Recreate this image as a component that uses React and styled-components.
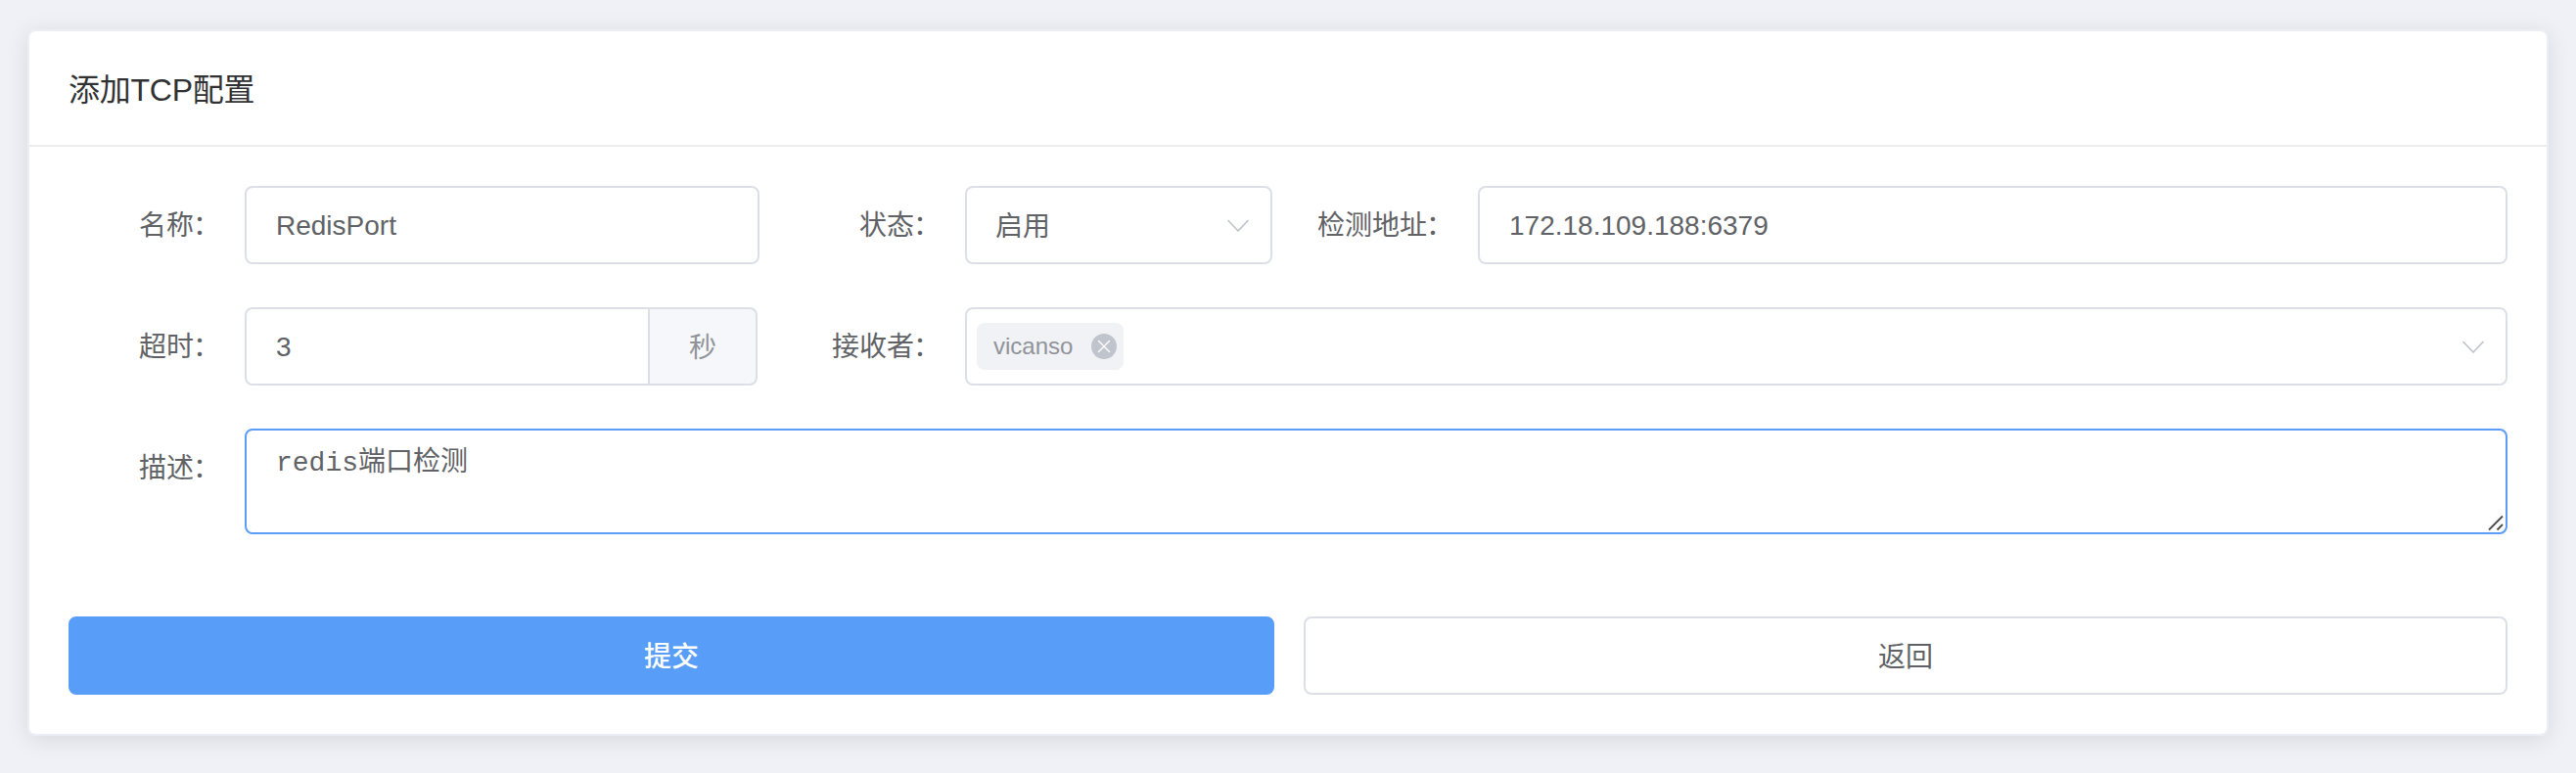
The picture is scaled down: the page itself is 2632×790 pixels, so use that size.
import React from "react";
import styled, { createGlobalStyle, css } from "styled-components";

const GlobalStyle = createGlobalStyle`
  *, *::before, *::after { box-sizing: border-box; }
  body {
    margin: 0;
    background: #f0f1f6;
    color: #606266;
    font-family: "Liberation Sans", "Noto Sans CJK SC", sans-serif;
    font-size: 28px;
    -webkit-font-smoothing: antialiased;
  }
`;

const Page = styled.main`
  height: 790px;
  padding: 30px 28px 38px;
  background: #f0f1f6;
  overflow: hidden;
`;

const Card = styled.section`
  height: 722px;
  border: 2px solid #ebeef5;
  border-radius: 8px;
  background: #fff;
  background-clip: padding-box;
  box-shadow: 0 4px 24px rgba(0, 0, 0, 0.1);
`;

const CardHeader = styled.header`
  display: flex;
  align-items: center;
  height: 118px;
  padding: 3px 40px 0;
  border-bottom: 2px solid #ebecf0;
`;

const Title = styled.h1`
  margin: 0;
  color: #303133;
  font-size: 32px;
  font-weight: 400;
  line-height: 40px;
  letter-spacing: -0.25px;
`;

const Form = styled.form`
  display: flex;
  flex-direction: column;
  gap: 44px;
  padding: 40px;
`;

const Row = styled.div`
  display: flex;
`;

const Field = styled.div`
  display: flex;
  align-items: flex-start;
  flex: ${(p) => (p.$width ? `0 0 ${p.$width}px` : "1 1 0")};
  min-width: 0;
`;

const LabelText = styled.label`
  flex: 0 0 ${(p) => p.$width || 180}px;
  height: 80px;
  padding-right: 24px;
  line-height: 82px;
  text-align: right;
  white-space: nowrap;
`;

const Colon = styled.span`
  margin: 0 1px 0 -1px;
`;

const control = css`
  height: 80px;
  border: 2px solid #dcdfe6;
  border-radius: 8px;
  background: #fff;
  color: #606266;
`;

const Input = styled.input`
  ${control}
  flex: 1;
  min-width: 0;
  margin: 0;
  padding: 2px 30px 0;
  outline: none;
  font: inherit;
  ${(p) => p.$joined && "border-radius: 8px 0 0 8px;"}
`;

const Unit = styled.span`
  display: flex;
  align-items: center;
  height: 80px;
  padding: 0 40px 2px;
  border: 2px solid #dcdfe6;
  border-left: 0;
  border-radius: 0 8px 8px 0;
  background: #f5f7fa;
  color: #909399;
`;

const Select = styled.div`
  ${control}
  display: flex;
  flex: 1;
  align-items: center;
  justify-content: space-between;
  padding: 0 21px 0 ${(p) => (p.$multiple ? 10 : 29)}px;
`;

const SelectValue = styled.span`
  padding-bottom: 3px;
`;

const Tag = styled.span`
  display: flex;
  align-items: center;
  justify-content: space-between;
  width: 150px;
  height: 48px;
  padding: 0 7px 0 17px;
  border-radius: 8px;
  background: #f0f2f5;
  color: #909399;
  font-size: 24px;
`;

const TextareaBox = styled.div`
  position: relative;
  display: flex;
  flex: 1;
`;

const Textarea = styled.textarea`
  ${control}
  flex: 1;
  height: 108px;
  margin: 0;
  padding: 13px 30px 7px;
  border-color: #5a9cf8;
  outline: none;
  resize: none;
  font-family: "Liberation Mono", "Noto Sans CJK SC", monospace;
  font-size: 28px;
  line-height: 42px;
`;

const GripIcon = styled.svg`
  position: absolute;
  right: 3px;
  bottom: 3px;
`;

const Actions = styled.div`
  display: flex;
  gap: 30px;
  margin-top: 40px;
`;

const Button = styled.button`
  flex: 0 0 ${(p) => p.$width}px;
  height: 80px;
  padding: 0 0 2px;
  border: 2px solid ${(p) => (p.$primary ? "#589df8" : "#dcdfe6")};
  border-radius: 8px;
  background: ${(p) => (p.$primary ? "#589df8" : "#fff")};
  color: ${(p) => (p.$primary ? "#fff" : "#606266")};
  font: inherit;
  font-weight: ${(p) => (p.$primary ? 500 : 400)};
`;

const Label = ({ text, width }) => (
  <LabelText $width={width}>
    {text}
    <Colon>：</Colon>
  </LabelText>
);

const Chevron = () => (
  <svg width="24" height="24" viewBox="0 0 24 24" fill="none">
    <path d="M2 7.5 12 18 22 7.5" stroke="#c0c4cc" strokeWidth="1.7" strokeLinecap="round" strokeLinejoin="round" />
  </svg>
);

const CloseIcon = () => (
  <svg width="26" height="26" viewBox="0 0 26 26" fill="none">
    <circle cx="13" cy="13" r="13" fill="#c0c4cc" />
    <path d="M7.5 7.5 18.5 18.5 M18.5 7.5 7.5 18.5" stroke="#fff" strokeWidth="1.4" strokeLinecap="round" />
  </svg>
);

export default function App() {
  return (
    <>
      <GlobalStyle />
      <Page>
        <Card>
          <CardHeader>
            <Title>添加TCP配置</Title>
          </CardHeader>
          <Form onSubmit={(e) => e.preventDefault()}>
            <Row>
              <Field $width={706}>
                <Label text="名称" />
                <Input defaultValue="RedisPort" />
              </Field>
              <Field $width={524}>
                <Label text="状态" width={210} />
                <Select>
                  <SelectValue>启用</SelectValue>
                  <Chevron />
                </Select>
              </Field>
              <Field>
                <Label text="检测地址" width={210} />
                <Input defaultValue="172.18.109.188:6379" />
              </Field>
            </Row>
            <Row>
              <Field $width={704}>
                <Label text="超时" />
                <Input defaultValue="3" $joined />
                <Unit>秒</Unit>
              </Field>
              <Field>
                <Label text="接收者" width={212} />
                <Select $multiple>
                  <Tag>
                    vicanso
                    <CloseIcon />
                  </Tag>
                  <Chevron />
                </Select>
              </Field>
            </Row>
            <Row>
              <Field>
                <Label text="描述" />
                <TextareaBox>
                  <Textarea defaultValue="redis端口检测" />
                  <GripIcon width="17" height="17" viewBox="0 0 17 17">
                    <path d="M1 15.5 15 1.5 M9.5 15.5 15 10" stroke="#4a4a4a" strokeWidth="1.8" fill="none" />
                  </GripIcon>
                </TextareaBox>
              </Field>
            </Row>
            <Actions>
              <Button type="submit" $primary $width={1232}>提交</Button>
              <Button type="button" $width={1230}>返回</Button>
            </Actions>
          </Form>
        </Card>
      </Page>
    </>
  );
}
